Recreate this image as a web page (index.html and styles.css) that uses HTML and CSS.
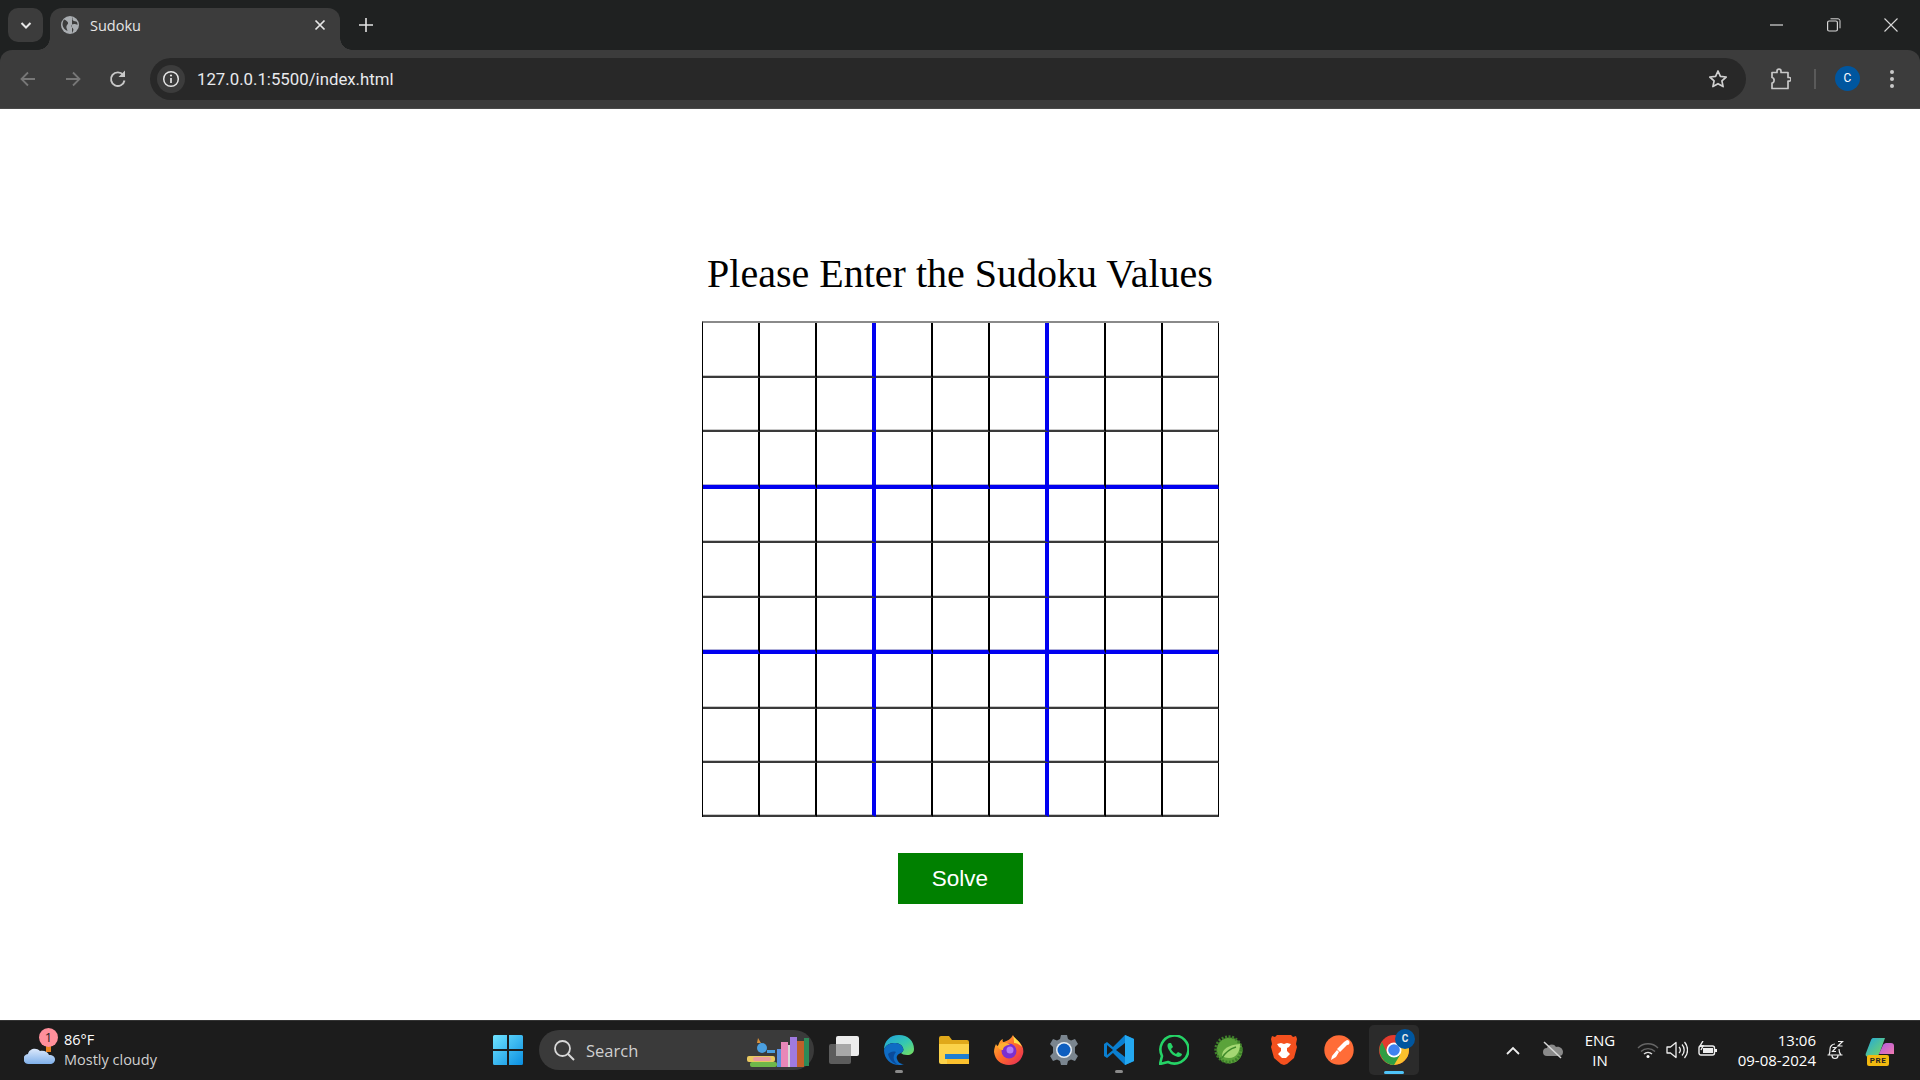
FILE: index.html
```html
<!DOCTYPE html>
<html lang="en">
<head>
<meta charset="utf-8">
<title>Sudoku</title>
<link rel="stylesheet" href="styles.css">
</head>
<body>
<div class="screen">
  <header class="browser">
    <div class="tabstrip">
      <button class="tab-search"><svg width="14" height="14" viewBox="0 0 14 14"><path d="M2.5 5l4.5 4.5L11.500 5" fill="none" stroke="#e8e8e8" stroke-width="2"/></svg></button>
      <div class="tab">
        <svg class="favicon" width="18" height="18" viewBox="0 0 18 18"><circle cx="9" cy="9" r="9" fill="#a9adb1"/><path d="M3 3.500c2 .5 3 1.500 4 3 .5 1.500-1 2-1.500 3.500-.5 1.500.5 3 1 5-2.500-1-4.500-3-5-6 0-2 .5-4 1.500-5.500zM11 1c1 1.500 0 2.500 1 3.500s3 .5 4 1.500c.5 1 .5 2 .5 3-1.500-1-4-1.500-5.500-.5-1 1-.5 3 1 4 1 1 0 3-1 4.500" fill="#3c3c3c"/></svg>
        <span class="tab-title">Sudoku</span>
        <svg class="tab-close" width="12" height="12" viewBox="0 0 12 12"><path d="M1.500 1.500l9 9M10.500 1.500l-9 9" stroke="#e6e6e6" stroke-width="1.700"/></svg>
      </div>
      <svg class="new-tab" width="14" height="14" viewBox="0 0 14 14"><path d="M7 0v14M0 7h14" stroke="#e3e3e3" stroke-width="1.600"/></svg>
      <div class="window-controls">
        <svg width="14" height="14" viewBox="0 0 14 14"><path d="M0 7h13" stroke="#d8d8d8" stroke-width="1.200"/></svg>
        <svg width="14" height="14" viewBox="0 0 14 14"><rect x=".6" y="3" width="9.800" height="10" rx="1.500" fill="none" stroke="#d8d8d8" stroke-width="1.200"/><path d="M3.500 .8h7.500a2 2 0 0 1 2 2v7.500" fill="none" stroke="#d8d8d8" stroke-width="1"/></svg>
        <svg width="14" height="14" viewBox="0 0 14 14"><path d="M.5.500l13 13M13.500.500l-13 13" stroke="#d8d8d8" stroke-width="1.100"/></svg>
      </div>
    </div>
    <div class="toolbar">
      <svg class="nav nav-first" width="20" height="20" viewBox="0 0 20 20"><path d="M17 10H4M10 3.500L3.500 10l6.500 6.500" fill="none" stroke="#777" stroke-width="1.800"/></svg>
      <svg class="nav" width="20" height="20" viewBox="0 0 20 20"><path d="M3 10h13M10 3.500l6.500 6.500-6.500 6.500" fill="none" stroke="#777" stroke-width="1.800"/></svg>
      <svg class="nav" width="20" height="20" viewBox="0 0 20 20"><path d="M16.500 11.500a6.800 6.800 0 1 1-1.300-5.500" fill="none" stroke="#c8c8c8" stroke-width="1.900"/><path d="M17 1.500v6.500h-6.500z" fill="#c8c8c8"/></svg>
      <div class="omnibox">
        <span class="chip"><svg width="18" height="18" viewBox="0 0 18 18"><circle cx="9" cy="9" r="7.300" fill="none" stroke="#e4e4e4" stroke-width="1.500"/><path d="M9 8v5" stroke="#e4e4e4" stroke-width="1.700"/><circle cx="9" cy="5.500" r="1.100" fill="#e4e4e4"/></svg></span>
        <span class="url">127.0.0.1:5500/index.html</span>
        <svg class="star" width="20" height="20" viewBox="0 0 20 20"><path d="M10 2l2.400 5.400 5.800.6-4.300 3.900 1.200 5.700L10 14.700l-5.100 2.900 1.200-5.700L1.800 8l5.800-.6z" fill="none" stroke="#d0d0d0" stroke-width="1.700" stroke-linejoin="round"/></svg>
      </div>
      <svg class="ext" width="20" height="22" viewBox="0 0 20 22"><path d="M1 4.500h5V3.200a2 2 0 0 1 4 0V4.500h7v5h1.200a1.800 1.800 0 0 1 0 3.600H17v7.400H1V15a2.500 2.500 0 0 0 2-3 2.500 2.500 0 0 0-2-2.500z" fill="none" stroke="#c8c8c8" stroke-width="1.700" stroke-linejoin="round"/></svg>
      <span class="divider"></span>
      <span class="avatar">C</span>
      <svg class="menu" width="6" height="20" viewBox="0 0 6 20"><circle cx="3" cy="3" r="2" fill="#c8c8c8"/><circle cx="3" cy="10" r="2" fill="#c8c8c8"/><circle cx="3" cy="17" r="2" fill="#c8c8c8"/></svg>
    </div>
  </header>

  <main class="page">
    <h1 class="title">Please Enter the Sudoku Values</h1>
    <div class="board">
      <input class="cell"><input class="cell"><input class="cell vblue"><input class="cell"><input class="cell"><input class="cell vblue"><input class="cell"><input class="cell"><input class="cell edge">
      <input class="cell"><input class="cell"><input class="cell vblue"><input class="cell"><input class="cell"><input class="cell vblue"><input class="cell"><input class="cell"><input class="cell edge">
      <input class="cell hblue"><input class="cell hblue"><input class="cell vblue hblue"><input class="cell hblue"><input class="cell hblue"><input class="cell vblue hblue"><input class="cell hblue"><input class="cell hblue"><input class="cell edge hblue">
      <input class="cell"><input class="cell"><input class="cell vblue"><input class="cell"><input class="cell"><input class="cell vblue"><input class="cell"><input class="cell"><input class="cell edge">
      <input class="cell"><input class="cell"><input class="cell vblue"><input class="cell"><input class="cell"><input class="cell vblue"><input class="cell"><input class="cell"><input class="cell edge">
      <input class="cell hblue"><input class="cell hblue"><input class="cell vblue hblue"><input class="cell hblue"><input class="cell hblue"><input class="cell vblue hblue"><input class="cell hblue"><input class="cell hblue"><input class="cell edge hblue">
      <input class="cell"><input class="cell"><input class="cell vblue"><input class="cell"><input class="cell"><input class="cell vblue"><input class="cell"><input class="cell"><input class="cell edge">
      <input class="cell"><input class="cell"><input class="cell vblue"><input class="cell"><input class="cell"><input class="cell vblue"><input class="cell"><input class="cell"><input class="cell edge">
      <input class="cell"><input class="cell"><input class="cell vblue"><input class="cell"><input class="cell"><input class="cell vblue"><input class="cell"><input class="cell"><input class="cell edge">
    </div>
    <button class="solve">Solve</button>
  </main>

  <footer class="taskbar">
    <div class="weather">
      <span class="weather-icon">
        <svg width="32" height="22" viewBox="0 0 32 22"><defs><linearGradient id="cloud" x1="0" y1="0" x2="0" y2="1"><stop offset="0" stop-color="#dbe8fb"/><stop offset="1" stop-color="#7fb0ea"/></linearGradient></defs><rect x="22" y="2" width="5" height="7" fill="#e8811e"/><path d="M5 21a5 5 0 0 1-1-10c1-5 8-7 12-3 4-1 8 1 9 4 4 0 6 2 6 4.500S29 21 26 21z" fill="url(#cloud)"/></svg>
        <span class="badge">1</span>
      </span>
      <span class="weather-text"><span class="temp">86°F</span><span class="cond">Mostly cloudy</span></span>
    </div>
    <div class="center">
      <span class="slot"><svg width="30" height="30" viewBox="0 0 30 30"><defs><linearGradient id="win" x1="0" y1="0" x2="1" y2="1"><stop offset="0" stop-color="#6fe3ff"/><stop offset="1" stop-color="#0a8ee0"/></linearGradient></defs><path d="M0 1.500A1.500 1.500 0 0 1 1.500 0H14v14H0zM16 0h12.500A1.500 1.500 0 0 1 30 1.500V14H16zM0 16h14v14H1.500A1.500 1.500 0 0 1 0 28.500zM16 16h14v12.500a1.500 1.500 0 0 1-1.500 1.500H16z" fill="url(#win)"/></svg></span>
      <div class="search">
        <svg width="22" height="22" viewBox="0 0 22 22"><circle cx="9.500" cy="9.500" r="7.500" fill="none" stroke="#d8d8d8" stroke-width="1.800"/><path d="M15 15l6 6" stroke="#d8d8d8" stroke-width="2"/></svg>
        <span class="search-label">Search</span>
        <svg class="books" width="66" height="32" viewBox="0 0 66 32"><rect x="0" y="20" width="28" height="6" rx="2" fill="#e8c860"/><rect x="6" y="21" width="18" height="4" rx="2" fill="#e89aa0"/><rect x="3" y="26" width="27" height="5" rx="2" fill="#6fb84a"/><circle cx="15" cy="12" r="5" fill="#4a9fe0"/><path d="M11 2l3 5-4 0z" fill="#d8903a"/><rect x="20" y="14" width="8" height="3" fill="#4a9fe0"/><rect x="30" y="13" width="4" height="18" fill="#5a90e0"/><rect x="34" y="6" width="7" height="25" fill="#e887b8"/><rect x="41" y="9" width="2" height="22" fill="#d8d8d8"/><rect x="43" y="1" width="7" height="30" fill="#a07ae0"/><rect x="50" y="5" width="7" height="26" fill="#c0602a"/><rect x="57" y="2" width="5" height="28" fill="#2e8a58"/></svg>
      </div>
      <span class="slot"><svg width="30" height="28" viewBox="0 0 30 28"><rect x="0" y="8" width="22" height="20" rx="2" fill="#5c5c5c"/><rect x="7" y="0" width="23" height="20" rx="2" fill="#ececec"/><rect x="7" y="8" width="15" height="12" fill="#a8a8a8"/></svg></span>
      <span class="slot running"><svg width="30" height="30" viewBox="0 0 30 30"><defs><linearGradient id="edge" x1="0" y1="0" x2="1" y2="1"><stop offset="0" stop-color="#1f9fe0"/><stop offset=".55" stop-color="#35c8b0"/><stop offset="1" stop-color="#7be05a"/></linearGradient></defs><path d="M15 0c9 0 15 6 15 14 0 4-3 6-7 6-3 0-5-1-6-2 2-1 3-3 2-5-1-3-4-5-9-5C5 8 1 11 0 15 0 6 6 0 15 0z" fill="url(#edge)"/><path d="M0 15c1-4 5-7 10-7 5 0 8 2 9 5 1 2 0 4-2 5-3 1-5 3-4 6 1 3 3 5 7 5-2 1-4 1-5 1C7 30 0 24 0 15z" fill="#0f6cc4"/><path d="M4 19c2-2 5-3 8-2-2 2-3 5-2 8 1 2 2 4 5 5-6-1-10-6-11-11z" fill="#0a4a9a"/></svg></span>
      <span class="slot"><svg width="30" height="28" viewBox="0 0 30 28"><path d="M0 2a2 2 0 0 1 2-2h8l3 4h15a2 2 0 0 1 2 2v4H0z" fill="#e0a81a"/><path d="M0 8h30v18a2 2 0 0 1-2 2H2a2 2 0 0 1-2-2z" fill="#fbd24a"/><path d="M8 20h22v8H8z" fill="#fbc02d"/><rect x="6" y="18" width="24" height="5" fill="#1f7ed0"/></svg></span>
      <span class="slot"><svg width="30" height="30" viewBox="0 0 30 30"><defs><linearGradient id="fx" x1="0" y1="0" x2="1" y2="1"><stop offset="0" stop-color="#ffc430"/><stop offset=".5" stop-color="#ff6a2a"/><stop offset="1" stop-color="#e3245e"/></linearGradient></defs><path d="M19 0c1 3 3 4 5 6 5 4 6 9 5 13-2 7-7 11-14 11C7 30 1 25 0 17c0-3 1-6 2-8 .5 1 1 2 2 2 1-3 2-6 5-7-1 2 0 3 1 3 3-1 7-3 9-7z" fill="url(#fx)"/><circle cx="15" cy="16" r="7.500" fill="#7b2fd0"/><circle cx="16" cy="15" r="3.500" fill="#b37cf5"/><path d="M4 11c3-4 9-4 12-1-4 0-7 2-7 5-2 0-5-1-5-4z" fill="#ffb030"/><path d="M19 1c3 3 7 6 9 11-2-2-5-4-8-4 0-2 0-4-1-7z" fill="#ffe04a"/></svg></span>
      <span class="slot"><svg width="30" height="30" viewBox="0 0 30 30"><path d="M12 0h6l1 4 3 1.500 4-1.500 3 5-3 3v6l3 3-3 5-4-1.500-3 1.500-1 4h-6l-1-4-3-1.500-4 1.500-3-5 3-3v-6l-3-3 3-5 4 1.500L11 4z" fill="#7a858f"/><circle cx="15" cy="15" r="8" fill="#e8eef4"/><circle cx="15" cy="15" r="6.500" fill="#0f5fc0"/></svg></span>
      <span class="slot running"><svg width="30" height="30" viewBox="0 0 30 30"><path d="M21 0l9 4v22l-9 4-12-12-6 5-3-2v-12l3-2 6 5z" fill="#0a7fd0"/><path d="M21 0l9 4v22l-9 4z" fill="#24a8f0"/><path d="M21 8l-9 7 9 7z" fill="#1c1c1c"/><path d="M3 10l6 5-6 5z" fill="#1c1c1c"/></svg></span>
      <span class="slot"><svg width="30" height="30" viewBox="0 0 30 30"><path d="M1 29l2-8A14 14 0 1 1 9 27z" fill="none" stroke="#25d366" stroke-width="2.600" stroke-linejoin="round"/><path d="M10 8c-2 1-2 4 0 7 2 4 5 6 9 7 2 0 4-1 4-3l-4-2-2 2c-2-1-4-3-5-5l2-2-2-4z" fill="#25d366"/></svg></span>
      <span class="slot"><svg width="30" height="30" viewBox="0 0 30 30"><circle cx="15.500" cy="15.500" r="13" fill="#5ba33a"/><circle cx="14.500" cy="14.500" r="12.700" fill="none" stroke="#3e7f2a" stroke-width="3" stroke-dasharray="2 1.500"/><path d="M8 21c0-7 6-11 18-12 0 8-4 14-11 14-3 0-5-1-7-2z" fill="#a5d873"/><path d="M8 23c3-5 7-9 14-11" fill="none" stroke="#3e8a2a" stroke-width="1.500"/></svg></span>
      <span class="slot"><svg width="26" height="30" viewBox="0 0 26 30"><path d="M6 0h14l2 2 3-1 1 3-1 5 1 3-3 11-7 6-3 1-3-1-7-6-3-11 1-3-1-5 1-3 3 1z" fill="#f4501e"/><path d="M6 9l4-1 3 1 3-1 4 1-2 3-2 1v3l3 3-4 4h-4l-4-4 3-3v-3l-2-1z" fill="#fff"/></svg></span>
      <span class="slot"><svg width="30" height="30" viewBox="0 0 30 30"><circle cx="15" cy="15" r="14.700" fill="#ff6c37"/><path d="M23 5a2.500 2.500 0 0 1 0 5l-7 7-3-3 7-7zM13 15l2 2-3 5-5 3 1-4zM10 21l-2 3" fill="#fff"/></svg></span>
      <span class="slot active"><svg width="30" height="30" viewBox="0 0 30 30"><circle cx="15" cy="15" r="15" fill="#e33b2e"/><path d="M15 30a15 15 0 0 0 15-15c0-2-.4-4-1-5H15l-6 10-6 3c3 4 7 7 12 7z" fill="#fbc02d"/><path d="M3 7a15 15 0 0 0 0 16 15 15 0 0 0 12 7l6-10-6-5-6 5z" fill="#2f9e44"/><circle cx="15" cy="15" r="7.500" fill="#fff"/><circle cx="15" cy="15" r="5.800" fill="#3f82f0"/></svg><span class="chrome-badge">C</span></span>
    </div>
    <div class="tray">
      <span class="t-caret"><svg width="14" height="9" viewBox="0 0 14 9"><path d="M1 8l6-6 6 6" fill="none" stroke="#eee" stroke-width="1.800"/></svg></span>
      <span class="t-cloud"><svg width="22" height="18" viewBox="0 0 22 18"><path d="M5 15a4 4 0 0 1 0-8c1-4 7-5 9-1 4-1 7 2 7 5s-2 4-4 4z" fill="#8a8a8a"/><path d="M2 1l17 16" stroke="#d8d8d8" stroke-width="1.500"/></svg></span>
      <span class="t-lang"><span>ENG</span><span>IN</span></span>
      <span class="t-wifi"><svg width="22" height="16" viewBox="0 0 22 16"><path d="M1 6a14 14 0 0 1 20 0M4 9.500a10 10 0 0 1 14 0" fill="none" stroke="#666" stroke-width="1.400"/><path d="M7 12a6 6 0 0 1 8 0" fill="none" stroke="#ddd" stroke-width="1.400"/><circle cx="11" cy="14.500" r="1.500" fill="#fff"/></svg></span>
      <span class="t-vol"><svg width="22" height="18" viewBox="0 0 22 18"><path d="M1 6h3.500L10 1.500v15L4.500 12H1z" fill="none" stroke="#eee" stroke-width="1.300" stroke-linejoin="round"/><path d="M13 6a4 4 0 0 1 0 6M16 3.500a8 8 0 0 1 0 11M18.500 1a12 12 0 0 1 0 16" fill="none" stroke="#eee" stroke-width="1.300"/></svg></span>
      <span class="t-bat"><svg width="20" height="18" viewBox="0 0 20 18"><rect x="1" y="5" width="15.500" height="9" rx="2" fill="none" stroke="#eee" stroke-width="1.400"/><rect x="5" y="7" width="10" height="5" fill="#eee"/><rect x="17" y="8" width="2" height="3" fill="#eee"/><path d="M5 0L2 5h3L3 9" fill="none" stroke="#eee" stroke-width="1.400"/></svg></span>
      <span class="t-clock"><span>13:06</span><span>09-08-2024</span></span>
      <span class="t-bell"><svg width="18" height="20" viewBox="0 0 18 20"><path d="M3 15c1-2 1-3 1-6a5 5 0 0 1 5-5M13 9c0 3 1 5 2 6M1.500 15h15M6 15.500a3 3 0 0 0 6 0" fill="none" stroke="#eee" stroke-width="1.200"/><path d="M6.500 7.500h3.500L6.500 11.500h3.500M12 1.500h4.500L12 6h4.500" fill="none" stroke="#eee" stroke-width="1.200"/></svg></span>
      <span class="t-copilot"><svg width="30" height="26" viewBox="0 0 30 26"><defs><linearGradient id="co1" x1="0" y1="0" x2="1" y2="1"><stop offset="0" stop-color="#1fa8e0"/><stop offset="1" stop-color="#7ed957"/></linearGradient><linearGradient id="co2" x1="0" y1="0" x2="1" y2="1"><stop offset="0" stop-color="#b05ae0"/><stop offset="1" stop-color="#f07ab0"/></linearGradient></defs><path d="M8 1h12l-5 14c-1 3-3 5-6 5H4c-3 0-4-2-3-4l5-13c.5-1 1-2 2-2z" fill="url(#co1)"/><path d="M21 6h5c2 0 3 1 3 3v8H14l4-9c.5-1 2-2 3-2z" fill="url(#co2)"/></svg><span class="pre">PRE</span></span>
    </div>
  </footer>
</div>
</body>
</html>
```

FILE: styles.css
```css
* { box-sizing: border-box; }
html, body { margin: 0; height: 100%; }
body { background: #fff; font-family: "Liberation Serif", serif; overflow: hidden; }
svg { display: block; flex: none; }
.screen { height: 1080px; display: flex; flex-direction: column; }

/* Browser chrome */
.browser { flex: none; background: #1f2121; font-family: "Roboto", sans-serif; }
.tabstrip { height: 50px; display: flex; align-items: flex-start; padding: 8px 0 0 8px; }
.tab-search { width: 35px; height: 34px; padding: 0; border: 0; border-radius: 10px; background: #3c3c3c; display: flex; align-items: center; justify-content: center; }
.tab { position: relative; width: 290px; height: 42px; margin-left: 7px; padding: 0 0 8px 11px; background: #3c3c3c; border-radius: 12px 12px 0 0; display: flex; align-items: center; }
.tab::before, .tab::after { content: ""; position: absolute; bottom: 0; width: 12px; height: 12px; }
.tab::before { left: -12px; background: radial-gradient(circle at 0 0, transparent 11.500px, #3c3c3c 12px); }
.tab::after { right: -12px; background: radial-gradient(circle at 100% 0, transparent 11.500px, #3c3c3c 12px); }
.favicon { margin-right: 11px; }
.tab-title { flex: 1; color: #e6e6e6; font: 14.500px "Open Sans", sans-serif; }
.tab-close { margin-right: 14px; }
.new-tab { margin: 10px 0 0 19px; }
.window-controls { margin-left: auto; display: flex; gap: 43px; padding: 10px 22px 0 0; }
.toolbar { height: 59px; background: #3c3c3c; border-radius: 12px 12px 0 0; border-bottom: 1px solid #4a4a4a; display: flex; align-items: center; padding-bottom: 1px; }
.nav { margin-right: 25px; }
.nav-first { margin-left: 18px; }
.nav:nth-of-type(3) { margin-right: 23px; }
.omnibox { width: 1596px; height: 42px; margin-left: -1px; padding: 0 18px 0 7px; background: #282828; border-radius: 21px; display: flex; align-items: center; }
.chip { width: 28px; height: 28px; border-radius: 50%; background: #3c3c3c; display: flex; align-items: center; justify-content: center; }
.url { flex: 1; margin-left: 12px; color: #e8eaed; font: 16.800px "Roboto", sans-serif; }
.ext { margin-left: 25px; }
.divider { width: 2px; height: 20px; margin-left: 23px; background: #5a5a5a; }
.avatar { width: 25px; height: 25px; margin-left: 19px; border-radius: 50%; background: #00569f; color: #fff; font: 12px/25px "Roboto", sans-serif; text-align: center; }
.menu { margin-left: 29px; }

/* Page */
.page { flex: 1; display: flex; flex-direction: column; align-items: center; padding-top: 142px; background: #fff; }
.title { margin: 0; font: 400 40px/46px "Liberation Serif", serif; color: #000; }
.board { margin-top: 24px; border-left: 1px solid #000; border-top: 2px solid #8a8a8a; display: grid; grid-template-columns: 57px 57px 59px 57px 57px 59px 57px 57px 56px; grid-template-rows: 55px 54px 57px 54px 55px 56px 55px 54px 54px; }
.cell { display: block; width: 100%; height: 100%; min-width: 0; margin: 0; padding: 0; background: #fff; border: 0; border-right: 2px solid #000; border-bottom: 2px solid #3a3a3a; box-shadow: inset 0 -1px 0 #c8c8c8; outline: 0; border-radius: 0; }
.vblue { border-right: 4px solid #0000f0; }
.hblue { border-bottom: 4px solid #0000f0; box-shadow: inset 0 -1px 0 #b0b0d8; }
.edge { border-right-width: 1px; }
.solve { margin-top: 36px; width: 125px; height: 51px; padding: 0; border: 0; background: #008000; color: #fff; font: 22.500px "Liberation Sans", sans-serif; }

/* Taskbar */
.taskbar { flex: none; height: 60px; padding-bottom: 1px; background: #1c1c1c; border-top: 1px solid #333; display: flex; align-items: center; font-family: "Open Sans", sans-serif; color: #fff; }
.weather { width: 480px; padding-left: 24px; display: flex; align-items: center; }
.weather-icon { position: relative; width: 40px; height: 30px; padding-top: 8px; }
.badge { position: absolute; left: 15px; top: -7px; width: 19px; height: 19px; border-radius: 50%; background: #ff8f9b; color: #222; font-size: 13px; line-height: 19px; text-align: center; }
.weather-text { display: flex; flex-direction: column; font-size: 14.500px; line-height: 20px; }
.cond { color: #d0d0d0; }
.center { display: flex; align-items: center; }
.slot { position: relative; width: 55px; height: 50px; display: flex; align-items: center; justify-content: center; }
.running::after { content: ""; position: absolute; bottom: 2px; left: 24px; width: 8px; height: 3px; border-radius: 2px; background: #8a8a8a; }
.active { background: #2b2b2b; border-radius: 5px; width: 50px; margin-left: 3px; }
.active::after { content: ""; position: absolute; bottom: 1px; left: 15px; width: 20px; height: 3px; border-radius: 2px; background: #4fc3f7; }
.chrome-badge { position: absolute; left: 26px; top: 4px; width: 20px; height: 20px; border-radius: 50%; background: #00569f; color: #e8e8e8; font: 700 10px/20px "Roboto", sans-serif; text-align: center; }
.search { width: 275px; height: 40px; margin: 0 2px 0 4px; padding: 0 1px 0 14px; border-radius: 20px; background: #3a3a3a; display: flex; align-items: center; }
.search-label { flex: 1; margin-left: 11px; color: #d0d0d0; font-size: 16.500px; }
.books { margin-top: 4px; }
.tray { margin-left: auto; display: flex; align-items: center; font-size: 15px; line-height: 20px; }
.tray > span { display: flex; align-items: center; justify-content: center; height: 50px; }
.t-caret { width: 46px; }
.t-cloud { width: 46px; margin-left: -6px; }
.tray .t-lang { width: 28px; margin-left: 10px; flex-direction: column; }
.t-wifi { width: 28px; margin-left: 20px; }
.t-vol { width: 30px; }
.t-bat { width: 32px; }
.tray .t-clock { width: 92px; flex-direction: column; align-items: flex-end; }
.t-bell { width: 38px; }
.tray .t-copilot { position: relative; width: 52px; margin-right: 14px; }
.pre { position: absolute; left: 13px; bottom: 9px; width: 22px; height: 11px; border-radius: 2px; background: #f2b90f; color: #222; font: 700 8px/11px "Roboto", sans-serif; text-align: center; letter-spacing: .5px; }
```
